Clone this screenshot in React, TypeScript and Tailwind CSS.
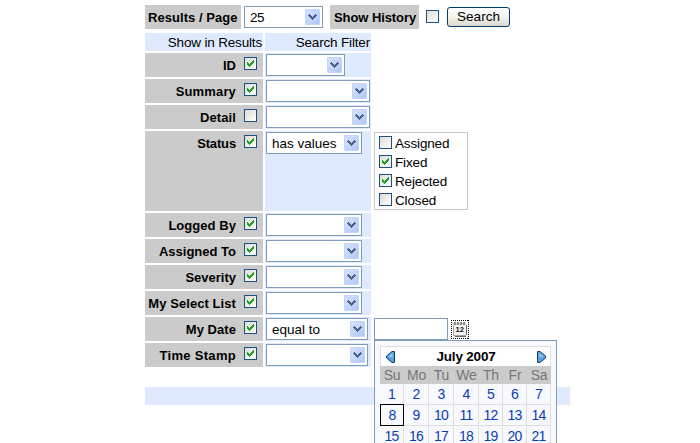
import React from "react";

function Check({ checked = false }: { checked?: boolean }) {
  return (
    <span className="block h-[13px] w-[13px] shrink-0 border border-[#1c5180] bg-linear-to-br from-[#dcdcd7] to-white">
      {checked && (
        <svg width="11" height="11" viewBox="0 0 11 11" shapeRendering="crispEdges" className="block">
          <path
            d="M2 4h1v3h-1zM3 5h1v3h-1zM4 6h1v3h-1zM5 5h1v3h-1zM6 4h1v3h-1zM7 3h1v3h-1zM8 2h1v3h-1z"
            fill="#21a121"
          />
        </svg>
      )}
    </span>
  );
}

function Select({ width, children }: { width: string; children?: React.ReactNode }) {
  return (
    <div className={`flex h-[22px] shrink-0 items-start justify-between border border-[#7f9db9] bg-white pt-[2px] pr-[2px] pl-[5px] ${width}`}>
      <span className="text-[13.5px] leading-[17px] whitespace-nowrap">{children}</span>
      <span className="flex h-4 w-[15px] shrink-0 items-center justify-center rounded-[1px] border border-[#c3d3fd] bg-linear-to-br from-[#d6e2fe] to-[#b0c8f8]">
        <svg width="9" height="6" viewBox="0 0 9 6" shapeRendering="crispEdges" className="shrink-0">
          <path
            d="M0 1h1v1H0zM1 0h1v3H1zM2 1h1v3H2zM3 2h1v3H3zM4 3h1v3H4zM5 2h1v3H5zM6 1h1v3H6zM7 0h1v3H7zM8 1h1v1H8z"
            fill="#4d6185"
          />
        </svg>
      </span>
    </div>
  );
}

type Row = {
  label: string;
  spacing: string;
  checked: boolean;
  width: string;
  value?: React.ReactNode;
  tall?: boolean;
  extra?: React.ReactNode;
};

const options = [
  { name: "Assigned", checked: false },
  { name: "Fixed", checked: true },
  { name: "Rejected", checked: true },
  { name: "Closed", checked: false },
];

function StatusValues() {
  return (
    <div className="mt-px ml-[3px] flex h-[78px] w-[94px] flex-col border border-[#c8c8c8] pt-[3px] pl-1">
      {options.map((o) => (
        <div key={o.name} className="flex h-[19px] shrink-0 items-start">
          <Check checked={o.checked} />
          <span className="ml-[3px] text-[13.5px] leading-[16px] tracking-[-0.15px]">{o.name}</span>
        </div>
      ))}
    </div>
  );
}

function CalendarIcon() {
  return (
    <svg width="18" height="19" viewBox="0 0 18 19" shapeRendering="crispEdges" className="block">
      <path d="M0 .5h18M0 18.5h18M.5 0v19M17.5 0v19" fill="none" stroke="#000" strokeDasharray="1 1" />
      <path d="M4 16h11V5h1v10h-1v2H4z" fill="#666" />
      <rect x="2" y="3" width="13" height="13" fill="#aaa8a4" />
      <rect x="3" y="5" width="12" height="10" fill="#f4f4f2" />
      <path d="M2 3h13v2H2z" fill="#d4d1cc" />
      <path d="M3 2h2v3H3zM6 2h2v3H6zM9 2h2v3H9zM12 2h2v3h-2z" fill="#8f8984" />
      <text x="4.6" y="12" fontSize="8" fontWeight="bold" textLength="8.5" lengthAdjust="spacingAndGlyphs" fill="#111">
        12
      </text>
    </svg>
  );
}

function Arrow({ right = false }: { right?: boolean }) {
  return (
    <svg width="9" height="12" viewBox="0 0 9 12" className={right ? "block -scale-x-100" : "block"}>
      <path d="M6 .5h2.5v11H6L.5 7V5z" fill="#5ba0dc" stroke="#14406c" />
      <path d="M6.5 2v4L2 6z" fill="#9bc8ef" />
    </svg>
  );
}

const days = ["Su", "Mo", "Tu", "We", "Th", "Fr", "Sa"];
const columns = "grid grid-cols-[24px_25px_25px_25px_24px_24px_24px]";

function Calendar() {
  return (
    <div className="absolute top-[23px] left-[3px] h-[140px] w-[183px] border border-[#7f9db9] bg-[#f7f9fc] pt-[5px] pl-[5px]">
      <div className="w-[171px]">
        <div className="flex h-5 items-center justify-between border border-b-0 border-[#dedede] bg-white pr-1 pl-[5px]">
          <Arrow />
          <span className="text-[13.5px] leading-[18px] font-bold tracking-[-0.2px]">July 2007</span>
          <Arrow right />
        </div>
        <div className={`${columns} h-[18px] bg-[#cbcbcb] text-center text-[14px] leading-[19px] tracking-[-0.2px] text-[#777]`}>
          {days.map((d) => (
            <span key={d}>{d}</span>
          ))}
        </div>
        <div className={`${columns} auto-rows-[21px] text-center text-[14px] leading-[20px] tracking-[-0.8px] text-[#0a3eb4]`}>
          {Array.from({ length: 21 }, (_, i) => i + 1).map((n) => (
            <span
              key={n}
              className={
                n === 8
                  ? "-mt-px h-[22px] border border-black bg-[#f7f9fc]"
                  : "border-r border-b border-[#dedede]"
              }
            >
              {n}
            </span>
          ))}
        </div>
      </div>
    </div>
  );
}

function DatePicker() {
  return (
    <div className="relative flex items-start pl-[3px]">
      <div className="mt-px h-[22px] w-[74px] border border-[#7f9db9] bg-white" />
      <div className="mt-[3px] ml-[3px]">
        <CalendarIcon />
      </div>
      <Calendar />
    </div>
  );
}

const rows: Row[] = [
  { label: "ID", spacing: "tracking-[0px]", checked: true, width: "w-[79px]" },
  { label: "Summary", spacing: "tracking-[0.15px]", checked: true, width: "w-[104px]" },
  { label: "Detail", spacing: "tracking-[0.1px]", checked: false, width: "w-[104px]" },
  {
    label: "Status",
    spacing: "tracking-[-0.15px]",
    checked: true,
    width: "w-[96px]",
    value: <span className="tracking-[0px]">has values</span>,
    tall: true,
    extra: <StatusValues />,
  },
  { label: "Logged By", spacing: "tracking-[0.05px]", checked: true, width: "w-[96px]" },
  { label: "Assigned To", spacing: "tracking-[0px]", checked: true, width: "w-[96px]" },
  { label: "Severity", spacing: "tracking-[0px]", checked: true, width: "w-[96px]" },
  { label: "My Select List", spacing: "tracking-[0.07px]", checked: true, width: "w-[96px]" },
  {
    label: "My Date",
    spacing: "tracking-[0.05px]",
    checked: true,
    width: "w-[102px]",
    value: <span className="tracking-[0px]">equal to</span>,
    extra: <DatePicker />,
  },
  { label: "Time Stamp", spacing: "tracking-[0.3px]", checked: true, width: "w-[102px]" },
];

export default function App() {
  return (
    <div className="h-[443px] w-[700px] overflow-hidden bg-white pt-[5px] pl-[145px] font-['Liberation_Sans',Arial,sans-serif] text-[13px] text-black">
      <div className="flex h-6 items-start">
        <div className="h-6 w-24 bg-[#cbcbcb] pl-[3px] leading-[25px] font-bold tracking-[0.05px] whitespace-nowrap">Results / Page</div>
        <div className="mt-px ml-[3px]">
          <Select width="w-[79px]">
            <span className="tracking-[-0.5px]">25</span>
          </Select>
        </div>
        <div className="ml-[7px] h-6 w-[89px] bg-[#cbcbcb] pl-[4px] leading-[25px] font-bold tracking-[-0.08px] whitespace-nowrap">Show History</div>
        <div className="mt-[5px] ml-[7px]">
          <Check />
        </div>
        <button className="mt-[2px] ml-2 h-5 w-[63px] rounded-[3px] border border-[#003c74] bg-linear-to-b from-white via-[#f3f3ee] to-[#dcd7cb] text-[13.5px] leading-[18px] tracking-[0px]">
          Search
        </button>
      </div>
      <div className="mt-1 flex h-[18px] gap-[2px] text-right text-[13.5px] leading-[19px] tracking-[-0.17px] whitespace-nowrap">
        <div className="w-[118px] bg-[#e0eaff] pr-px">Show in Results</div>
        <div className="w-[106px] bg-[#e0eaff] pr-px">Search Filter</div>
      </div>
      <div className="mt-[2px] flex flex-col gap-[2px]">
        {rows.map((r) => (
          <div key={r.label} className={`flex items-stretch ${r.tall ? "h-20" : "h-6"}`}>
            <div className="mr-[2px] flex w-[118px] items-start justify-end bg-[#cbcbcb] pr-[6px]">
              <span className={`mr-2 leading-[25px] font-bold whitespace-nowrap ${r.spacing}`}>{r.label}</span>
              <span className="mt-1">
                <Check checked={r.checked} />
              </span>
            </div>
            <div className="w-[106px] bg-[#e0eaff] pt-px pl-px">
              <Select width={r.width}>{r.value}</Select>
            </div>
            {r.extra}
          </div>
        ))}
      </div>
      <div className="mt-5 h-[18px] w-[425px] bg-[#e0eaff]" />
    </div>
  );
}
